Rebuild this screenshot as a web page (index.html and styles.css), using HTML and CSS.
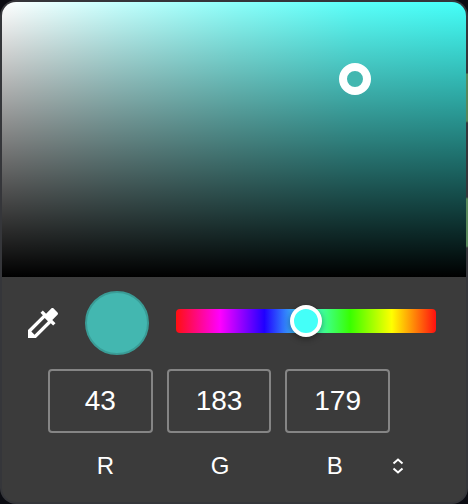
FILE: index.html
```html
<!DOCTYPE html>
<html lang="en">
<head>
    <meta charset="UTF-8">
    <meta name="viewport" content="width=device-width, initial-scale=1.0">
    <title>Color picker</title>
    <link rel="stylesheet" href="styles.css">
</head>
<body>
    <div class="picker">
        <div class="shade">
            <button class="shade-handle" type="button" aria-label="Saturation and brightness"></button>
        </div>
        <div class="controls">
            <div class="hue-row">
                <button class="eyedropper" type="button" aria-label="Pick a color from the screen">
                    <svg viewBox="0 0 24 24" width="40" height="40" fill="#fff">
                        <path d="M20.71 5.63l-2.34-2.34c-.39-.39-1.02-.39-1.41 0l-3.12 3.12-1.93-1.91-1.41 1.41 1.42 1.42L3 16.25V21h4.75l8.92-8.92 1.42 1.42 1.41-1.41-1.92-1.92 3.12-3.12c.4-.4.4-1.03.01-1.42zM6.92 19L5 17.08l8.06-8.06 1.92 1.92L6.92 19z"/>
                    </svg>
                </button>
                <div class="swatch"></div>
                <input class="hue" type="range" min="0" max="360" value="180" aria-label="Hue">
            </div>
            <div class="values">
                <input id="red" type="text" inputmode="numeric" value="43">
                <input id="green" type="text" inputmode="numeric" value="183">
                <input id="blue" type="text" inputmode="numeric" value="179">
            </div>
            <div class="labels">
                <label for="red">R</label>
                <label for="green">G</label>
                <label for="blue">B</label>
                <button class="format" type="button" aria-label="Change color format">
                    <svg viewBox="0 0 12 16" width="12" height="16" fill="none" stroke="#fff" stroke-width="2">
                        <path d="M1.5 5.5L6 1.5l4.5 4M1.5 10.5l4.5 4 4.5-4"/>
                    </svg>
                </button>
            </div>
        </div>
    </div>
</body>
</html>
```
FILE: styles.css
```css
* {
    box-sizing: border-box;
}
body {
    margin: 0;
    background-color: #0b0c12;
    font-family: "Liberation Sans", Arial, sans-serif;
    color: #fff;
}
button {
    padding: 0;
    border: none;
    background: none;
    cursor: pointer;
}
svg {
    display: block;
}
.picker {
    display: flex;
    flex-direction: column;
    min-height: 100vh;
    padding: 2px;
    border-radius: 16px;
    background-color: #35363a;
    background-image: linear-gradient(#35363a 73px, #58875a 74px 121px, #35363a 123px 197px, #58875a 199px 246px, #35363a 248px);
    background-position: right top;
    background-size: 2px 100%;
    background-repeat: no-repeat;
}
.shade {
    position: relative;
    height: 275px;
    border-radius: 14px 14px 0 0;
    background-image:
        linear-gradient(to top, #000, transparent),
        linear-gradient(to right, #fff, #c3fffd 25%, #8cfffa 50%, #5afff9 76%, #44fff8);
}
.shade-handle {
    position: absolute;
    left: 76%;
    top: 28%;
    width: 32px;
    height: 32px;
    border: 8px solid #fff;
    border-radius: 50%;
    background-color: #43b7b0;
    transform: translate(-50%, -50%);
}
.controls {
    flex: 1;
    padding-top: 14px;
    border-radius: 0 0 14px 14px;
    background-color: #3b3b3b;
}
.hue-row {
    display: flex;
    align-items: center;
    padding: 0 30px 0 21px;
}
.eyedropper {
    margin-right: 22px;
}
.swatch {
    flex: none;
    width: 64px;
    height: 64px;
    margin-right: 27px;
    border: 2px solid #3a9c96;
    border-radius: 50%;
    background-color: #43b7b0;
}
.hue {
    flex: 1;
    min-width: 0;
    height: 24px;
    margin: 0 0 4px;
    border-radius: 4px;
    background: linear-gradient(to right, #ff1010, #ff00ff 17%, #2000ff 34%, #44fff8 50%, #38ff00 67%, #ffff00 83%, #ff1010);
    appearance: none;
    -webkit-appearance: none;
}
.hue::-webkit-slider-thumb {
    width: 32px;
    height: 32px;
    border: 4px solid #fff;
    border-radius: 50%;
    background-color: #44fff8;
    box-shadow: 0 2px 6px rgba(0,0,0,0.4);
    appearance: none;
    -webkit-appearance: none;
}
.values {
    display: grid;
    grid-template-columns: repeat(3, 1fr);
    gap: 14px;
    margin: 14px 76px 0 46px;
}
.values input {
    min-width: 0;
    height: 64px;
    padding: 0;
    border: 2px solid #858585;
    border-radius: 4px;
    background: none;
    color: #fff;
    font-family: inherit;
    font-size: 28px;
    text-align: center;
}
.labels {
    display: grid;
    grid-template-columns: repeat(3, 1fr) 12px;
    align-items: center;
    margin: 19px 62px 0 46px;
    font-size: 24px;
    line-height: 28px;
    text-align: center;
}
```
